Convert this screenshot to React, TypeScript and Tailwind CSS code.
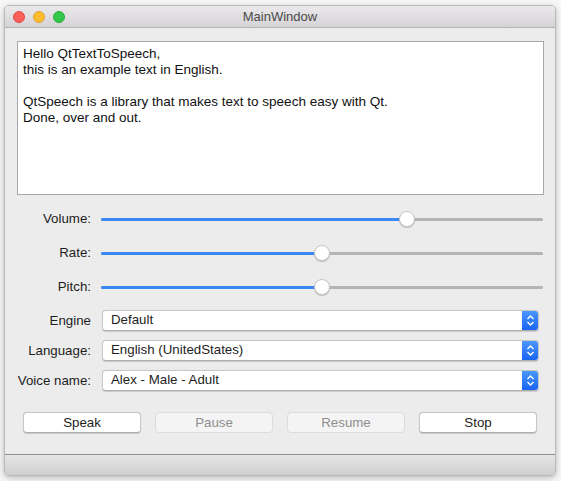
import React from "react";

const font = { fontFamily: '"Liberation Sans", Arial, sans-serif' };

function Slider({ label, value }: { label: string; value: number }) {
  // value is the thumb position as a fraction of the track
  return (
    <div className="flex items-center h-[34px]">
      <div className="w-[74px] text-right text-[13.3px] text-[#1d1d1d]">{label}</div>
      <div className="relative ml-[10px] w-[442px] h-[16px] flex items-center">
        <div className="w-full h-[3px] rounded-full bg-[#b4b4b4]" />
        <div
          className="absolute left-0 h-[3px] rounded-l-full bg-[#3b88f5]"
          style={{ width: `${value * 100}%` }}
        />
        <div
          className="absolute w-[16px] h-[16px] rounded-full bg-white border border-[#c6c6c6] shadow-[0_1px_1px_rgba(0,0,0,0.2)] -translate-x-1/2"
          style={{ left: `${value * 100}%` }}
        />
      </div>
    </div>
  );
}

function Combo({ label, value }: { label: string; value: string }) {
  return (
    <div className="flex items-center h-[21px]">
      <div className="w-[74px] text-right text-[13.3px] text-[#1d1d1d]">{label}</div>
      <div className="ml-[11px] w-[437px] h-[21px] flex rounded-[4px] bg-white border border-[#c8c8c8] border-b-[#aeaeae] shadow-[0_0.5px_1px_rgba(0,0,0,0.15)] overflow-hidden">
        <div className="flex-1 pl-[8px] text-[13.3px] leading-[18px] text-[#1d1d1d]">{value}</div>
        <div className="w-[16px] h-full flex items-center justify-center bg-gradient-to-b from-[#4a97fa] to-[#1b63f2]">
          <svg width="9" height="13" viewBox="0 0 9 13" fill="none" stroke="white" strokeWidth="1.4">
            <path d="M1.5 5 L4.5 2 L7.5 5" />
            <path d="M1.5 8 L4.5 11 L7.5 8" />
          </svg>
        </div>
      </div>
    </div>
  );
}

function PushButton({ text, disabled }: { text: string; disabled?: boolean }) {
  return (
    <div
      className={
        "w-[118px] h-[21px] rounded-[4px] border text-center text-[13.3px] leading-[19px] " +
        (disabled
          ? "bg-[#f4f4f4] border-[#dcdcdc] text-[#8e8e8e]"
          : "bg-white border-[#c6c6c6] border-b-[#acacac] text-[#1d1d1d] shadow-[0_0.5px_1px_rgba(0,0,0,0.15)]")
      }
    >
      {text}
    </div>
  );
}

export default function App() {
  return (
    <div className="w-[561px] h-[481px] bg-[#f7f7f7] pt-[5px] pl-[4px]" style={font}>
      <div className="w-[552px] h-[471px] flex flex-col rounded-[5px] border border-[#b9b9b9] bg-[#ececec] shadow-[0_2px_6px_rgba(0,0,0,0.25)] overflow-hidden">
        <div className="relative h-[22px] flex items-center justify-center pt-[1px] border-b border-[#b2b2b2] bg-gradient-to-b from-[#ebe9eb] to-[#d5d3d5]">
          <div className="absolute left-[8px] top-[5px] flex gap-[8px]">
            <div className="w-[12px] h-[12px] rounded-full bg-[#fc5f57] border border-[#de4a43]" />
            <div className="w-[12px] h-[12px] rounded-full bg-[#fdbc2e] border border-[#dea235]" />
            <div className="w-[12px] h-[12px] rounded-full bg-[#34c84a] border border-[#2aab3d]" />
          </div>
          <span className="text-[13px] text-[#4a4a4a]">MainWindow</span>
        </div>

        <div className="flex-1 px-[12px] pt-[13px]">
          <div className="h-[154px] w-[527px] bg-white border border-[#a8a8a8] pl-[5px] pt-[4px] text-[13.5px] leading-[16px] text-[#111]">
            <div>Hello QtTextToSpeech,</div>
            <div>this is an example text in English.</div>
            <div>&nbsp;</div>
            <div>QtSpeech is a library that makes text to speech easy with Qt.</div>
            <div>Done, over and out.</div>
          </div>

          <div className="mt-[7px]">
            <Slider label="Volume:" value={0.693} />
            <Slider label="Rate:" value={0.5} />
            <Slider label="Pitch:" value={0.5} />
          </div>

          <div className="mt-[6px] flex flex-col gap-[9px]">
            <Combo label="Engine" value="Default" />
            <Combo label="Language:" value="English (UnitedStates)" />
            <Combo label="Voice name:" value="Alex - Male - Adult" />
          </div>

          <div className="mt-[21px] ml-[6px] flex gap-[14px]">
            <PushButton text="Speak" />
            <PushButton text="Pause" disabled />
            <PushButton text="Resume" disabled />
            <PushButton text="Stop" />
          </div>
        </div>

        <div className="h-[21px] border-t border-[#8e8e8e] bg-gradient-to-b from-[#e6e6e6] to-[#cfcfcf]" />
      </div>
    </div>
  );
}
